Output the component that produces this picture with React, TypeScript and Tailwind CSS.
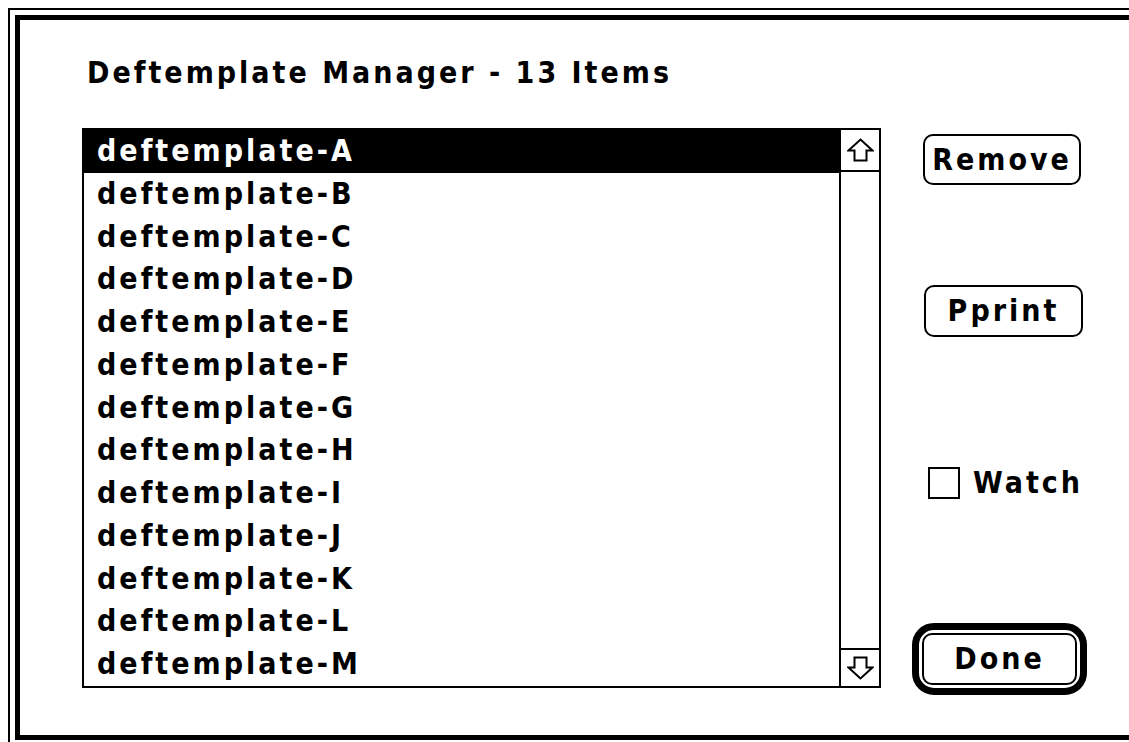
const ITEMS = 'ABCDEFGHIJKLM'.split('').map((c) => `deftemplate-${c}`)

function ArrowIcon({ down = false }: { down?: boolean }) {
  return (
    <svg
      width="27"
      height="24"
      viewBox="0 0 27 24"
      className={down ? 'rotate-180' : ''}
    >
      <polygon
        points="13.5,1.5 25.5,12.5 19.5,12.5 19.5,22.5 7.5,22.5 7.5,12.5 1.5,12.5"
        fill="white"
        stroke="black"
        strokeWidth="2"
        strokeLinejoin="miter"
      />
    </svg>
  )
}

function MacButton({ label, className = '' }: { label: string; className?: string }) {
  return (
    <div
      className={`flex items-center justify-center rounded-[10px] border-2 border-black bg-white leading-[28px] ${className}`}
    >
      {label}
    </div>
  )
}

/** Deftemplate Manager dialog — classic Mac look. */
export default function App() {
  return (
    <div className="h-[742px] w-[1129px] overflow-hidden bg-white pt-2 pl-2 font-['DejaVu_Sans_Condensed',sans-serif] text-[30px] font-bold tracking-[3px] text-black">
      <div className="h-[739px] w-[1150px] border-2 border-black p-[5px]">
        <div className="flex h-full items-start border-[5px] border-black">
          {/* left: title + list */}
          <div className="ml-[62px] flex flex-col">
            <div className="mt-[37px] ml-[5px] h-[32px] leading-[32px] whitespace-nowrap">
              Deftemplate Manager - 13 Items
            </div>
            <div className="mt-[39px] flex h-[560px] w-[799px] border-2 border-black">
              <div className="flex flex-1 flex-col">
                {ITEMS.map((item, i) => (
                  <div
                    key={item}
                    className={`h-[42.77px] pl-[13px] leading-[42.77px] whitespace-nowrap ${
                      i === 0 ? 'bg-black text-white' : ''
                    }`}
                  >
                    {item}
                  </div>
                ))}
              </div>
              <div className="flex w-[40px] flex-col border-l-2 border-black">
                <div className="flex h-[42px] items-center justify-center border-b-2 border-black">
                  <ArrowIcon />
                </div>
                <div className="flex-1" />
                <div className="flex h-[38px] items-center justify-center border-t-2 border-black">
                  <ArrowIcon down />
                </div>
              </div>
            </div>
          </div>

          {/* right: buttons */}
          <div className="mt-[108px] ml-[31px] flex w-[175px] flex-col">
            <MacButton label="Remove" className="mt-[6px] ml-[11px] h-[51px] w-[158px]" />
            <MacButton label="Pprint" className="mt-[100px] ml-[12px] h-[52px] w-[159px]" />
            <div className="mt-[130px] ml-[16px] flex items-center gap-[13px] leading-[28px]">
              <div className="h-[32px] w-[32px] border-2 border-black" />
              <span>Watch</span>
            </div>
            <div className="mt-[124px] h-[72px] w-[175px] rounded-[22px] border-[7px] border-black p-[3px]">
              <MacButton label="Done" className="h-full w-full" />
            </div>
          </div>
        </div>
      </div>
    </div>
  )
}
